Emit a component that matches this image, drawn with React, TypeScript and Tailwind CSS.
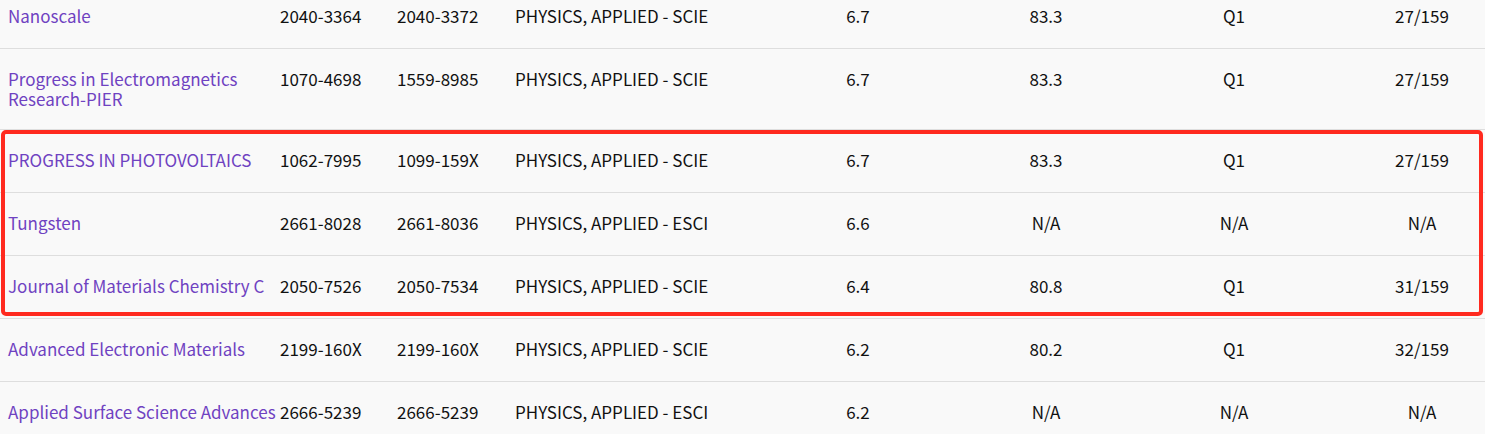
import React from 'react';

type Journal = {
  name: string;
  wrap?: boolean;
  issn: string;
  eissn: string;
  category: string;
  jif: string;
  percentile: string;
  quartile: string;
  rank: string;
};

const JOURNALS: Journal[] = [
  { name: 'Nanoscale', issn: '2040-3364', eissn: '2040-3372', category: 'PHYSICS, APPLIED - SCIE', jif: '6.7', percentile: '83.3', quartile: 'Q1', rank: '27/159' },
  { name: 'Progress in Electromagnetics Research-PIER', wrap: true, issn: '1070-4698', eissn: '1559-8985', category: 'PHYSICS, APPLIED - SCIE', jif: '6.7', percentile: '83.3', quartile: 'Q1', rank: '27/159' },
  { name: 'PROGRESS IN PHOTOVOLTAICS', issn: '1062-7995', eissn: '1099-159X', category: 'PHYSICS, APPLIED - SCIE', jif: '6.7', percentile: '83.3', quartile: 'Q1', rank: '27/159' },
  { name: 'Tungsten', issn: '2661-8028', eissn: '2661-8036', category: 'PHYSICS, APPLIED - ESCI', jif: '6.6', percentile: 'N/A', quartile: 'N/A', rank: 'N/A' },
  { name: 'Journal of Materials Chemistry C', issn: '2050-7526', eissn: '2050-7534', category: 'PHYSICS, APPLIED - SCIE', jif: '6.4', percentile: '80.8', quartile: 'Q1', rank: '31/159' },
  { name: 'Advanced Electronic Materials', issn: '2199-160X', eissn: '2199-160X', category: 'PHYSICS, APPLIED - SCIE', jif: '6.2', percentile: '80.2', quartile: 'Q1', rank: '32/159' },
  { name: 'Applied Surface Science Advances', issn: '2666-5239', eissn: '2666-5239', category: 'PHYSICS, APPLIED - ESCI', jif: '6.2', percentile: 'N/A', quartile: 'N/A', rank: 'N/A' },
];

function Row({ j }: { j: Journal }) {
  return (
    <div className="grid min-h-[63px] grid-cols-[272px_117px_118px_257px_188px_188px_188px_157px] items-start border-b border-[#dedede] py-5 leading-5">
      <div className={j.wrap ? 'pl-2 text-[#6f42c1]' : 'pl-2 whitespace-nowrap text-[#6f42c1]'}>{j.name}</div>
      <div className="pl-2">{j.issn}</div>
      <div className="pl-2">{j.eissn}</div>
      <div className="pl-2 whitespace-nowrap">{j.category}</div>
      <div className="text-center">{j.jif}</div>
      <div className="text-center">{j.percentile}</div>
      <div className="text-center">{j.quartile}</div>
      <div className="pl-[31px] text-center">{j.rank}</div>
    </div>
  );
}

export default function App() {
  return (
    <div className="h-[434px] overflow-hidden bg-[#f9f9f9] font-['Noto_Sans_CJK_SC','Noto_Sans',sans-serif] text-[17px] text-[#111]">
      <div className="-mt-[14px]">
        {JOURNALS.slice(0, 2).map((j) => (
          <Row key={j.issn} j={j} />
        ))}
        <div className="relative">
          {JOURNALS.slice(2, 5).map((j) => (
            <Row key={j.issn} j={j} />
          ))}
          <div className="pointer-events-none absolute top-0 right-[2px] bottom-[3px] left-px rounded-[5px] border-4 border-[#ff2a1f]" />
        </div>
        {JOURNALS.slice(5).map((j) => (
          <Row key={j.issn} j={j} />
        ))}
      </div>
    </div>
  );
}
